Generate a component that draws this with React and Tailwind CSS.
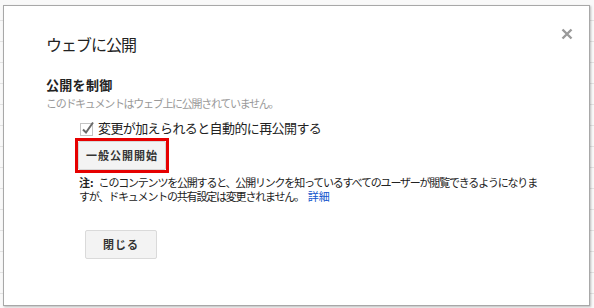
import React from "react";

const jp = { fontFamily: '"Noto Sans CJK JP", "Noto Sans", sans-serif' };

function CloseIcon() {
  return (
    <svg width="12" height="12" viewBox="0 0 12 12">
      <path d="M1.5 1.5 L10.5 10.5 M10.5 1.5 L1.5 10.5" stroke="#9a9a9a" strokeWidth="2.4" />
    </svg>
  );
}

function CheckIcon() {
  return (
    <svg width="16" height="16" viewBox="0 0 16 16">
      <rect x="1.5" y="3.5" width="12" height="12" fill="#fff" stroke="#c4c4c4" />
      <path d="M4 9.5 L7 12.5 L14 2.5" fill="none" stroke="#6a6a6a" strokeWidth="2" />
    </svg>
  );
}

export default function App() {
  return (
    <div
      style={jp}
      className="w-[594px] h-[308px] overflow-hidden bg-[#f9f9f9] bg-[repeating-linear-gradient(to_bottom,transparent_0,transparent_20px,#e3e3e3_20px,#e3e3e3_21px)] pt-[5px] pl-[3px]"
    >
      <div className="relative w-[587px] h-[301px] bg-white border border-[#a8a8a8] shadow-[1px_1px_2px_rgba(0,0,0,0.25)] pl-[42px] pt-[28px]">
        <button className="absolute top-[22px] right-[16px]">
          <CloseIcon />
        </button>

        <h2 className="text-[16px] leading-[20px] tracking-[-1px] text-[#222]">ウェブに公開</h2>

        <h3 className="mt-[23px] text-[13px] leading-[16px] font-bold text-[#222] tracking-[0.3px]">公開を制御</h3>
        <p className="mt-[3px] text-[11px] leading-[14px] tracking-[-1.3px] text-[#999]">
          このドキュメントはウェブ上に公開されていません。
        </p>

        <div className="ml-[33px]">
          <label className="mt-[10px] flex items-center gap-[3px] text-[13px] leading-[16px] tracking-[-0.6px] text-[#222]">
            <CheckIcon />
            変更が加えられると自動的に再公開する
          </label>

          <div className="mt-[2px] -ml-[4px] w-[94px] h-[35px] border-[3px] border-[#e60000] flex">
            <button className="w-full h-full bg-[#f3f3f3] border border-[#d6d6d6] rounded-[2px] text-[11px] font-bold tracking-[1px] text-[#333]">
              一般公開開始
            </button>
          </div>

          <p className="mt-[2px] w-[462px] text-[11px] leading-[14px] text-[#222]">
            <b className="mr-[5px] tracking-normal">注:</b>
            <span className="tracking-[-1.2px]">
              このコンテンツを公開すると、公開リンクを知っているすべてのユーザーが閲覧できるようになりますが、ドキュメントの共有設定は変更されません。
            </span>
            <a href="#" className="ml-[4px] tracking-normal text-[#1155cc]">詳細</a>
          </p>
        </div>

        <button className="mt-[27px] ml-[39px] w-[72px] h-[29px] bg-[#f3f3f3] border border-[#dadada] rounded-[2px] text-[11px] font-bold tracking-[1px] text-[#333]">
          閉じる
        </button>
      </div>
    </div>
  );
}
